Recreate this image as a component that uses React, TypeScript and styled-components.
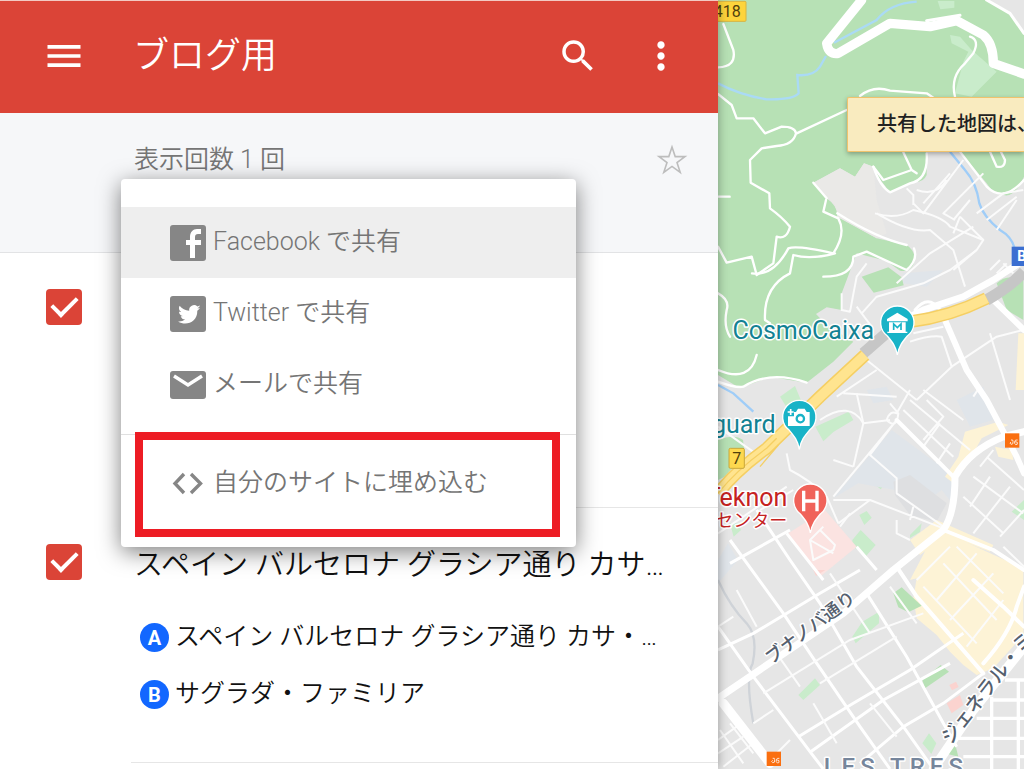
import React from "react";
import styled, { createGlobalStyle } from "styled-components";
import { MdMenu, MdSearch, MdMoreVert } from "react-icons/md";

const GlobalStyle = createGlobalStyle`
  * { box-sizing: border-box; }
  body {
    margin: 0;
    overflow: hidden;
    background: #fff;
    font-family: Roboto, "Noto Sans CJK JP", sans-serif;
  }
  button, h1, h2, p, ul { margin: 0; padding: 0; font: inherit; }
  ul { list-style: none; }
`;

const Page = styled.main`
  display: flex;
  min-height: 100vh;
`;

const Panel = styled.section`
  position: relative;
  z-index: 1;
  flex: 0 0 718px;
  background: #fff;
  box-shadow: 0 0 10px rgba(0, 0, 0, 0.35);
`;

const Header = styled.header`
  display: flex;
  align-items: center;
  height: 113px;
  padding: 0 35px 2px 42px;
  border-top: 1px solid #f3c9c2;
  background: #db4437;
  color: #fff;
`;

const IconButton = styled.button`
  display: flex;
  border: 0;
  background: none;
  color: inherit;
  cursor: pointer;
`;

const Title = styled.h1`
  flex: 1;
  margin-left: 47px;
  font-size: 36px;
  font-weight: 350;
  line-height: 48px;
`;

const HeaderActions = styled.div`
  display: flex;
  align-items: center;
  gap: 40px;
`;

const Summary = styled.div`
  display: flex;
  align-items: flex-start;
  justify-content: space-between;
  height: 140px;
  padding: 31px 30px 0 134px;
  border-bottom: 1px solid #e2e3e5;
  background: #f6f7f9;
  color: #757575;
  font-size: 25px;
  font-weight: 350;
  line-height: 32px;
`;

const StarButton = styled(IconButton)`
  color: #bdbdbd;
`;

const Layer = styled.article`
  display: flex;
  height: 255px;
`;

const LayerSide = styled.div`
  flex: 0 0 131px;
  padding: 36px 0 0 46px;
`;

const Checkbox = styled.input`
  display: grid;
  place-items: center;
  appearance: none;
  width: 36px;
  height: 36px;
  margin: 0;
  border-radius: 4px;
  background: #db4437;
  &::before {
    content: "";
    width: 11px;
    height: 21px;
    margin-top: -8px;
    border: solid #fff;
    border-width: 0 4px 4px 0;
    transform: rotate(45deg);
  }
`;

const LayerBody = styled.div`
  flex: 1;
  min-width: 0;
  padding: 37px 0 0 3px;
  border-bottom: 1px solid #e6e6e6;
  color: #111;
`;

const LayerTitle = styled.h2`
  font-size: 29px;
  font-weight: 350;
  line-height: 40px;
  white-space: nowrap;
`;

const Places = styled.ul`
  padding: 23px 0 0 6px;
`;

const Place = styled.li`
  display: flex;
  align-items: center;
  gap: 6px;
  height: 57px;
  font-size: 25px;
  font-weight: 350;
  line-height: 32px;
  white-space: nowrap;
`;

const Badge = styled.span`
  display: grid;
  place-items: center;
  flex: 0 0 29px;
  height: 29px;
  margin-top: 2px;
  border-radius: 50%;
  background: #1267ff;
  color: #fff;
  font-size: 20px;
  font-weight: 700;
  line-height: 24px;
`;

const Menu = styled.div`
  position: absolute;
  top: 179px;
  left: 121px;
  width: 455px;
  padding: 28px 0;
  border-radius: 4px;
  background: #fff;
  box-shadow: 0 5px 22px rgba(0, 0, 0, 0.5);
`;

const MenuItem = styled.button<{ $active?: boolean }>`
  display: flex;
  align-items: center;
  gap: 7px;
  width: 100%;
  height: 71px;
  padding: 0 0 7px 49px;
  border: 0;
  background: ${(p) => (p.$active ? "#eee" : "transparent")};
  color: #757575;
  font-size: 25px;
  font-weight: 350;
  text-align: left;
  white-space: nowrap;
  cursor: pointer;
  svg {
    flex: none;
    margin-top: 8px;
    color: #868686;
  }
`;

const Divider = styled.hr`
  height: 1px;
  margin: 14px 0 13px;
  border: 0;
  background: #e0e0e0;
`;

const Highlight = styled.div`
  position: absolute;
  top: 253px;
  left: 14px;
  right: 16px;
  height: 105px;
  border: 8px solid #ed1c24;
  pointer-events: none;
`;

const MapArea = styled.section`
  position: relative;
  flex: 1;
  min-width: 0;
  overflow: hidden;
  background: #e6e6e6;
`;

const MapDrawing = styled.svg`
  position: absolute;
  inset: 0;
  width: 100%;
  height: 100%;
`;

const Notice = styled.p`
  position: absolute;
  top: 97px;
  left: 129px;
  right: 0;
  overflow: hidden;
  border: 1px solid #f0c36d;
  border-right: 0;
  border-radius: 2px 0 0 2px;
  background: #f9ebbf;
  box-shadow: 0 2px 5px rgba(0, 0, 0, 0.3);
  color: #222;
  && {
    padding: 0 0 0 29px;
  }
  font-size: 20px;
  font-weight: 500;
  line-height: 53px;
  white-space: nowrap;
`;

const StarIcon = () => (
  <svg width="32" height="32" viewBox="0 0 32 32" aria-hidden="true">
    <path
      d="M16 3l3.200 9.600H29l-8 6 3.200 9.700L16 22.400l-8.200 5.900L11 18.600l-8-6h9.800z"
      fill="none"
      stroke="currentColor"
      strokeWidth="1.600"
    />
  </svg>
);

const FacebookIcon = () => (
  <svg width="36" height="36" viewBox="0 0 36 36" aria-hidden="true">
    <rect width="36" height="36" rx="3" fill="currentColor" />
    <path d="M20 33V20h-4v-5h4v-3c0-5 3-8 7-8h4v5h-3c-2 0-3 1-3 3v3h6v5h-6v13z" fill="#fff" />
  </svg>
);

const TwitterIcon = () => (
  <svg width="36" height="36" viewBox="0 0 36 36" aria-hidden="true">
    <rect width="36" height="36" rx="3" fill="currentColor" />
    <path
      d="M30 9.600c-.8.4-1.700.6-2.600.8a4.900 4.900 0 0 0-8.200 4.300c-4-.2-7.200-2-9.600-5-1.300 2.200-.6 4.900 1.500 6.300-.8 0-1.500-.2-2.100-.6 0 2.300 1.500 4.200 3.700 4.700-.7.2-1.400.2-2 .1.600 2 2.300 3.300 4.400 3.400a10 10 0 0 1-7 1.900c8 5 19.500.5 19.200-10.800 1-.7 1.900-1.700 2.700-2.900-.9.400-1.700.6-2.500.7.900-.7 1.900-1.600 2.500-2.900z"
      fill="#fff"
    />
  </svg>
);

const MailIcon = () => (
  <svg width="36" height="28" viewBox="0 0 36 28" aria-hidden="true">
    <rect width="36" height="28" rx="3" fill="currentColor" />
    <path d="M4 5l14 9 14-9" fill="none" stroke="#fff" strokeWidth="3.400" />
  </svg>
);

const CodeIcon = () => (
  <svg width="36" height="36" viewBox="0 0 36 36" aria-hidden="true">
    <path d="M14 8l-9 9.500 9 9.500M21 8l9.500 9.500L21 27" fill="none" stroke="currentColor" strokeWidth="3.400" />
  </svg>
);

const Pin = ({ x, y, color, children }: { x: number; y: number; color: string; children: React.ReactNode }) => (
  <g transform={`translate(${x} ${y})`}>
    <path
      d="M0 97C-5 70-15 58-30 40a50 50 0 1 1 60 0C15 58 5 70 0 97z"
      fill={color}
      stroke="#fff"
      strokeWidth="4"
    />
    {children}
  </g>
);

const MetroSign = ({ x, y }: { x: number; y: number }) => (
  <g transform={`translate(${x} ${y})`}>
    <rect width="43" height="43" fill="#fa6f10" />
    <path d="M18 20q7-2 6 4 2 10-6 9-6-4 0-7M38 20q-8-2-9 5 4 0 8 2 2 8-5 7-5-4-3-9" fill="none" stroke="#ffe3d0" strokeWidth="3" />
  </g>
);

const CityMap = () => (
  <MapDrawing viewBox="24 0 918 2307" preserveAspectRatio="xMinYMin slice" role="img" aria-label="地図">
    {/* terrain */}
    <rect x="0" y="0" width="3000" height="2400" fill="#e6e6e6" />
    <g fill="#b7e1b5">
      <path d="M24 0H830L890 30 942 100V530Q915 590 885 586 850 585 830 550L750 455H650V525Q640 550 605 545L540 577 505 532 490 500 462 490 435 530 390 505 310 548 350 595Q385 620 382 650L500 715 590 735Q620 755 612 790 600 818 570 812L528 782 440 760 395 880V930L350 922 318 942 350 975 430 1025 370 1085 290 1148 180 1130 90 1165 24 1125z" />
      <path d="M455 830l80-28 40 30 6 24-90 22z" />
      <path d="M860 850q30-30 80-10v120l-50-30z" />
      <path d="M24 1320q50-20 75 0l5 40-60 70-20 10z" />
    </g>
    <path d="M310 548l80-43 45 25 27-40 28 10 10 100 30 100-30 15-118-65q0-40-32-55z" fill="#eae9e7" />
    <g fill="#c9eccb">
      <path d="M720 105l30 5 35 40 75 65-75 75-50-10 25-95 15-30-50-25zM683 3h50v20l-42 5z" />
      <path d="M210 1190l45-32 25 60-40 20z" />
      <path d="M316 1280l100-45 14 25-60 36-30 28zM488 1448l20-10 20 12-16 18zM448 1545l22-12 15 20-22 22zM427 1620l25-30 45 45-28 32-42-28zM600 1605l35-35-5 26-30 18z" />
      <path d="M427 1910l30-45 50-30v35l-70 60zM265 2085l50-50 15 20-50 45zM637 2230l20-30 22 30-15 32zM60 1570h25l8 20-22 20zM905 1535l37-35v60z" />
    </g>
    <g fill="#b7e1b5">
      <path d="M637 2040l55-45 25 20-72 50zM705 2260l30-30 10 40z" />
    </g>
    <g fill="#e0e5ea">
      <path d="M370 1495l105-125 70-80 190 140v90l-40-50-80 60-60-60-110-20zM740 1200l80-40 30 100-70 20zM24 1680l30-50 30 50-60 70zM580 820l120-10-50 50-70-10zM470 1170l60-10 20 40-60 10z" />
    </g>
    <path d="M550 1445l50-20 110 85-30 55-80-20-45-60z" fill="#dedfe1" />
    <path d="M235 1600l110-70 95 110-110 90z" fill="#fbe3e1" />
    <g fill="#fbd3cf">
      <path d="M710 2110l40-25 10 30-35 25zM718 2055l20-10 8 16-20 10zM310 1710h36l-28 18z" />
    </g>
    <g fill="#fdf3d6">
      <path d="M600 1740l60-115 40-30 240 110v200l-90 100-50 20-40-30-40-40-40-50-60-50-10-60 10-60z" />
      <path d="M765 1295l100-30 30 10-80 40-50 90-40 40-20-15 40-60zM855 1340l50 10 5 30-45-10zM600 1620l80-60 170 75-10 20-130-50-80 60zM925 1000h17v170h-25z" />
    </g>
    <path d="M550 1780l25-18 60 55-40 20-30-15z" fill="#b7e1b5" />

    {/* water */}
    <g fill="none" stroke="#aadaf5" strokeWidth="7">
      <path d="M24 250Q90 285 170 298 250 300 266 280L262 225Q310 230 330 200L348 168" />
      <path d="M372 128L500 60Q540 10 620 5" />
      <path d="M720 455L765 510Q800 550 808 610 820 650 870 690 905 710 914 745" stroke="#9fcdf8" />
      <path d="M24 1155L70 1180 130 1235" stroke="#9fcdf8" />
    </g>

    {/* railway */}
    <path d="M24 1740Q60 1820 110 1870 145 1910 128 1990 105 2030 130 2170" fill="none" stroke="#cfd3d8" strokeWidth="7" />

    {/* mountain paths */}
    <g fill="none" stroke="#fff" strokeWidth="7" strokeLinecap="round" strokeLinejoin="round">
      <path d="M40 72L70 150Q80 200 24 202M24 282L65 315 80 355 130 355 165 400 215 380Q255 380 258 400 250 435 200 438L155 445 120 480 122 548 178 580 180 625Q215 650 240 680 230 720 200 710L190 790 140 825 125 770 50 788 24 740" />
      <path d="M260 400L410 330M450 288Q490 255 540 272L650 280 680 300M780 110Q810 120 790 160L765 190Q720 230 735 290" />
      <path d="M126 820Q190 830 235 745 260 735 370 760 410 700 385 655L340 635 348 600M375 760Q300 780 250 765L240 820Q160 860 165 960L180 970M340 830Q430 830 430 770L470 755 590 810Q625 780 612 745" />
      <path d="M24 880Q60 900 50 930 40 980 60 1010M140 1065Q120 1150 24 1110M24 590h35" />
      <path d="M310 548L350 595M490 500L520 540 605 510 580 457M605 510l15 10M840 455l20 45q25 5 25-20l-15-30" />
      <path d="M24 1145Q80 1165 100 1160 180 1110 290 1148M382 640Q500 715 590 735" />
      <path d="M490 500Q510 560 540 577L600 550Q655 540 650 460M750 455L830 560Q880 610 942 540" />
    </g>

    {/* minor streets */}
    <g fill="none" stroke="#fbfbfb" strokeWidth="6" strokeLinejoin="round">
      <path d="M495 640Q560 660 610 630 700 650 720 680L820 720M500 640Q600 700 660 690L730 750 765 860M660 760L790 680M660 760L560 850M395 880V930L420 935 440 830 470 790" />
      <path d="M610 610L640 640 760 480M640 610L720 520M820 520L700 640 735 660M620 570q60 20 90-30M590 565l20 20v30" />
      <path d="M455 940L500 890 640 850 720 810 800 750M440 920l15 20 30 40" />
      <path d="M750 650L820 720 800 750 730 810M750 650L730 700M780 600L730 660M800 640l80-60 60-10M830 660l90-70M860 690l60-90" />
      <path d="M840 810l30-30M860 820l30-30M880 790l30 30" />
      <path d="M600 1025Q660 1005 695 1010L725 1100 620 1200M610 1000L700 980M470 1080L620 1200M400 1180L560 1190M380 1190L500 1110" />
      <path d="M560 1260L370 1490M600 1170L560 1240Q540 1230 530 1260 560 1290 565 1240L540 1210M440 1180L460 1270 430 1400M460 1270L540 1260M560 1260L730 1430M560 1260L480 1365 560 1435 560 1480 700 1580M370 1500L480 1500 700 1585M610 1520L600 1560M480 1500L385 1570M560 1560V1600L600 1620" />
      <path d="M230 1360L240 1410Q300 1440 350 1490L385 1570M330 1260Q420 1200 460 1270M370 1380l60 20M420 1540l-30 40" />
      <path d="M725 1100L860 1010 940 990M840 1000L900 1200M790 1190L810 1160M600 1200L780 1350M580 1230L730 1370M650 1200L700 1250 640 1320M690 1270l-50 70M720 1330l-40 60M640 1170l120 90" />
      <path d="M760 1490L880 1600M790 1430L940 1540M830 1370L942 1470M900 1460L790 1600M840 1430l-60 90M870 1610L942 1530M810 1400l40-50" />
      <path d="M24 1280L150 1370M24 1480L150 1380M24 1600L100 1550 230 1460M150 1530L250 1470" />
      <path d="M340 1580L300 1620 310 1680 370 1650 375 1635 330 1590M300 1620l70 40" />
    </g>

    {/* city grid */}
    <g fill="none" stroke="#fff" strokeWidth="9">
      <path d="M24 1880L130 2030 300 2255 340 2307M60 1620L220 1840 310 1975 450 2180 540 2307M140 1530L240 1680 330 1810 440 2000 580 2180 670 2307M230 1600L340 1740M470 1780L590 1970 700 2170 740 2240M440 1640L500 1710" />
      <path d="M24 1950L130 1900 330 1780 450 1710M265 2210L430 2110 600 2010 760 1900M300 2257L520 2100 720 1990M450 2290L580 2180 700 2110 820 2020M60 1690L240 1590" />
    </g>
    <g fill="none" stroke="#fbfbfb" strokeWidth="6">
      <path d="M160 2080L420 1920 640 1840M330 2050L560 1910M80 1770L140 1880M200 1960L270 2060M310 2110L380 2230M360 1720L480 1900M540 1760L620 1870M480 2110L560 2210M24 1880L70 1850M190 2130L130 2170" />
      <path d="M640 1760L800 1930M700 1690L860 1860M740 1640L880 1780M720 1860L850 1720M680 1800L800 1660M770 1940L880 1800M620 1740L720 1640M880 1640L942 1700" />
      <path d="M24 2220L80 2180M24 2260L100 2210M40 2300L130 2230M60 2170L130 2260M30 2190L100 2290M180 2280L240 2220" />
    </g>
    <g fill="none" stroke="#fff" strokeWidth="10">
      <path d="M740 2215H942M800 2155H942M840 2100H942M845 2090V2307M925 2040V2307M760 2270H942M885 2040H942" />
    </g>

    {/* main roads */}
    <g fill="none" stroke="#fff" strokeLinecap="round" strokeLinejoin="round">
      <path d="M455 0L350 130Q355 165 385 160L540 70 660 80 740 62 820 105Q850 130 850 190L942 222" strokeWidth="28" />
      <path d="M650 62l100-16M830 0l70 40 42 60" strokeWidth="9" />
      <path d="M942 780L850 840 760 890 640 930 600 950" strokeWidth="20" />
      <path d="M615 930q40-50 75 0" strokeWidth="9" />
      <path d="M24 2095L200 1975M400 1840L550 1710 700 1590Q735 1540 735 1430 780 1350 880 1310L942 1295M200 1975L400 1840" strokeWidth="21" />
      <path d="M705 960L770 1110 830 1200 920 1370 942 1420M850 900L942 990" strokeWidth="18" />
      <path d="M40 2110L180 2290" strokeWidth="28" />
      <path d="M670 2307L790 2130 942 1940" strokeWidth="28" />
      <path d="M560 1700L620 1790 820 2020M700 1590L850 1650 942 1710M560 1260L730 1430" strokeWidth="12" />
      <path d="M820 1990Q900 1900 920 1820L942 1760M790 1740L880 1820 942 1880" strokeWidth="12" />
    </g>

    {/* ring road */}
    <g fill="none">
      <path d="M830 900Q900 860 942 815M460 1060L540 990" stroke="#c6c6c6" strokeWidth="34" />
      <path d="M24 1480Q80 1410 170 1345L330 1190 465 1065M600 965Q720 950 830 895" stroke="#f5cf63" strokeWidth="38" />
      <path d="M24 1480Q80 1410 170 1345L330 1190 465 1065M600 965Q720 950 830 895" stroke="#ffe48f" strokeWidth="29" />
      <path d="M24 1480Q80 1410 170 1345L200 1315M150 1400l55-65" stroke="#f5cf63" strokeWidth="4" />
    </g>

    {/* road shields */}
    <rect x="-10" y="4" width="118" height="60" rx="3" fill="#fdd43c" stroke="#d8b440" strokeWidth="3" />
    <text x="92" y="52" textAnchor="end" fontSize="48" fill="#50400c">418</text>
    <rect x="57" y="1345" width="46" height="60" rx="4" fill="#fdd84f" stroke="#c9a83c" strokeWidth="3" />
    <text x="80" y="1393" textAnchor="middle" fontSize="48" fill="#50400c">7</text>
    <rect x="905" y="740" width="60" height="58" fill="#3b6fd1" />
    <text x="922" y="783" fontSize="42" fontWeight="700" fill="#fff">B</text>
    <MetroSign x={885} y={1300} />
    <MetroSign x={170} y={2255} />

    {/* places */}
    <g stroke="#fff" strokeWidth="9" strokeLinejoin="round" paintOrder="stroke" fontWeight="400">
      <text x="492" y="1017" textAnchor="end" fontSize="75" fill="#138293">CosmoCaixa</text>
      <text x="197" y="1299" textAnchor="end" fontSize="75" fill="#138293">guard</text>
      <text x="232" y="1517" textAnchor="end" fontSize="75" fill="#c5221f">Teknon</text>
      <text x="232" y="1580" textAnchor="end" fontSize="54" fill="#c5221f">センター</text>
      <g fontWeight="500">
        <text transform="translate(184 1994) rotate(-37)" fontSize="54" fill="#55606e">ブナノバ通り</text>
        <text transform="translate(722 2236) rotate(-52)" fontSize="58" fill="#55606e">ジェネラル・ミ</text>
        <text x="341" y="2324" fontSize="72" letterSpacing="15" fill="#76869c">LES TRES</text>
      </g>
    </g>
    <Pin x={562} y={968} color="#18b3c7">
      <path d="M-31-11L0-30 31-11v7h-62zM-25-1h50v28h5v4h-60v-4h5z" fill="#fff" />
      <path d="M-11 22V4L0 15 11 4v18" fill="none" stroke="#18b3c7" strokeWidth="5" />
    </Pin>
    <Pin x={268} y={1251} color="#18b3c7">
      <path d="M-10-15l6-10h20l6 10h9v42h-65V-2h18v-13z" fill="#fff" />
      <circle cx="3" cy="5" r="11" fill="none" stroke="#18b3c7" strokeWidth="7" />
      <path d="M-26-24v18M-35-15h18" stroke="#fff" strokeWidth="5" />
    </Pin>
    <Pin x={301} y={1502} color="#f0635a">
      <path d="M-20-30v62M20-30v62M-20 1h40" stroke="#fff" strokeWidth="10" />
    </Pin>
  </MapDrawing>
);

export default function App() {
  return (
    <>
      <GlobalStyle />
      <Page>
        <Panel>
          <Header>
            <IconButton aria-label="メニュー"><MdMenu size={44} /></IconButton>
            <Title>ブログ用</Title>
            <HeaderActions>
              <IconButton aria-label="検索"><MdSearch size={42} /></IconButton>
              <IconButton aria-label="その他"><MdMoreVert size={44} /></IconButton>
            </HeaderActions>
          </Header>
          <Summary>
            <p>表示回数 1 回</p>
            <StarButton aria-label="スターを付ける"><StarIcon /></StarButton>
          </Summary>
          <Layer>
            <LayerSide><Checkbox type="checkbox" defaultChecked aria-label="レイヤ 1" /></LayerSide>
            <LayerBody />
          </Layer>
          <Layer>
            <LayerSide><Checkbox type="checkbox" defaultChecked aria-labelledby="route" /></LayerSide>
            <LayerBody>
              <LayerTitle id="route">スペイン バルセロナ グラシア通り カサ…</LayerTitle>
              <Places>
                <Place><Badge>A</Badge>スペイン バルセロナ グラシア通り カサ・…</Place>
                <Place><Badge>B</Badge>サグラダ・ファミリア</Place>
              </Places>
            </LayerBody>
          </Layer>
          <Menu>
            <MenuItem $active><FacebookIcon />Facebook で共有</MenuItem>
            <MenuItem><TwitterIcon />Twitter で共有</MenuItem>
            <MenuItem><MailIcon />メールで共有</MenuItem>
            <Divider />
            <MenuItem><CodeIcon />自分のサイトに埋め込む</MenuItem>
            <Highlight />
          </Menu>
        </Panel>
        <MapArea>
          <CityMap />
          <Notice>共有した地図は、</Notice>
        </MapArea>
      </Page>
    </>
  );
}
